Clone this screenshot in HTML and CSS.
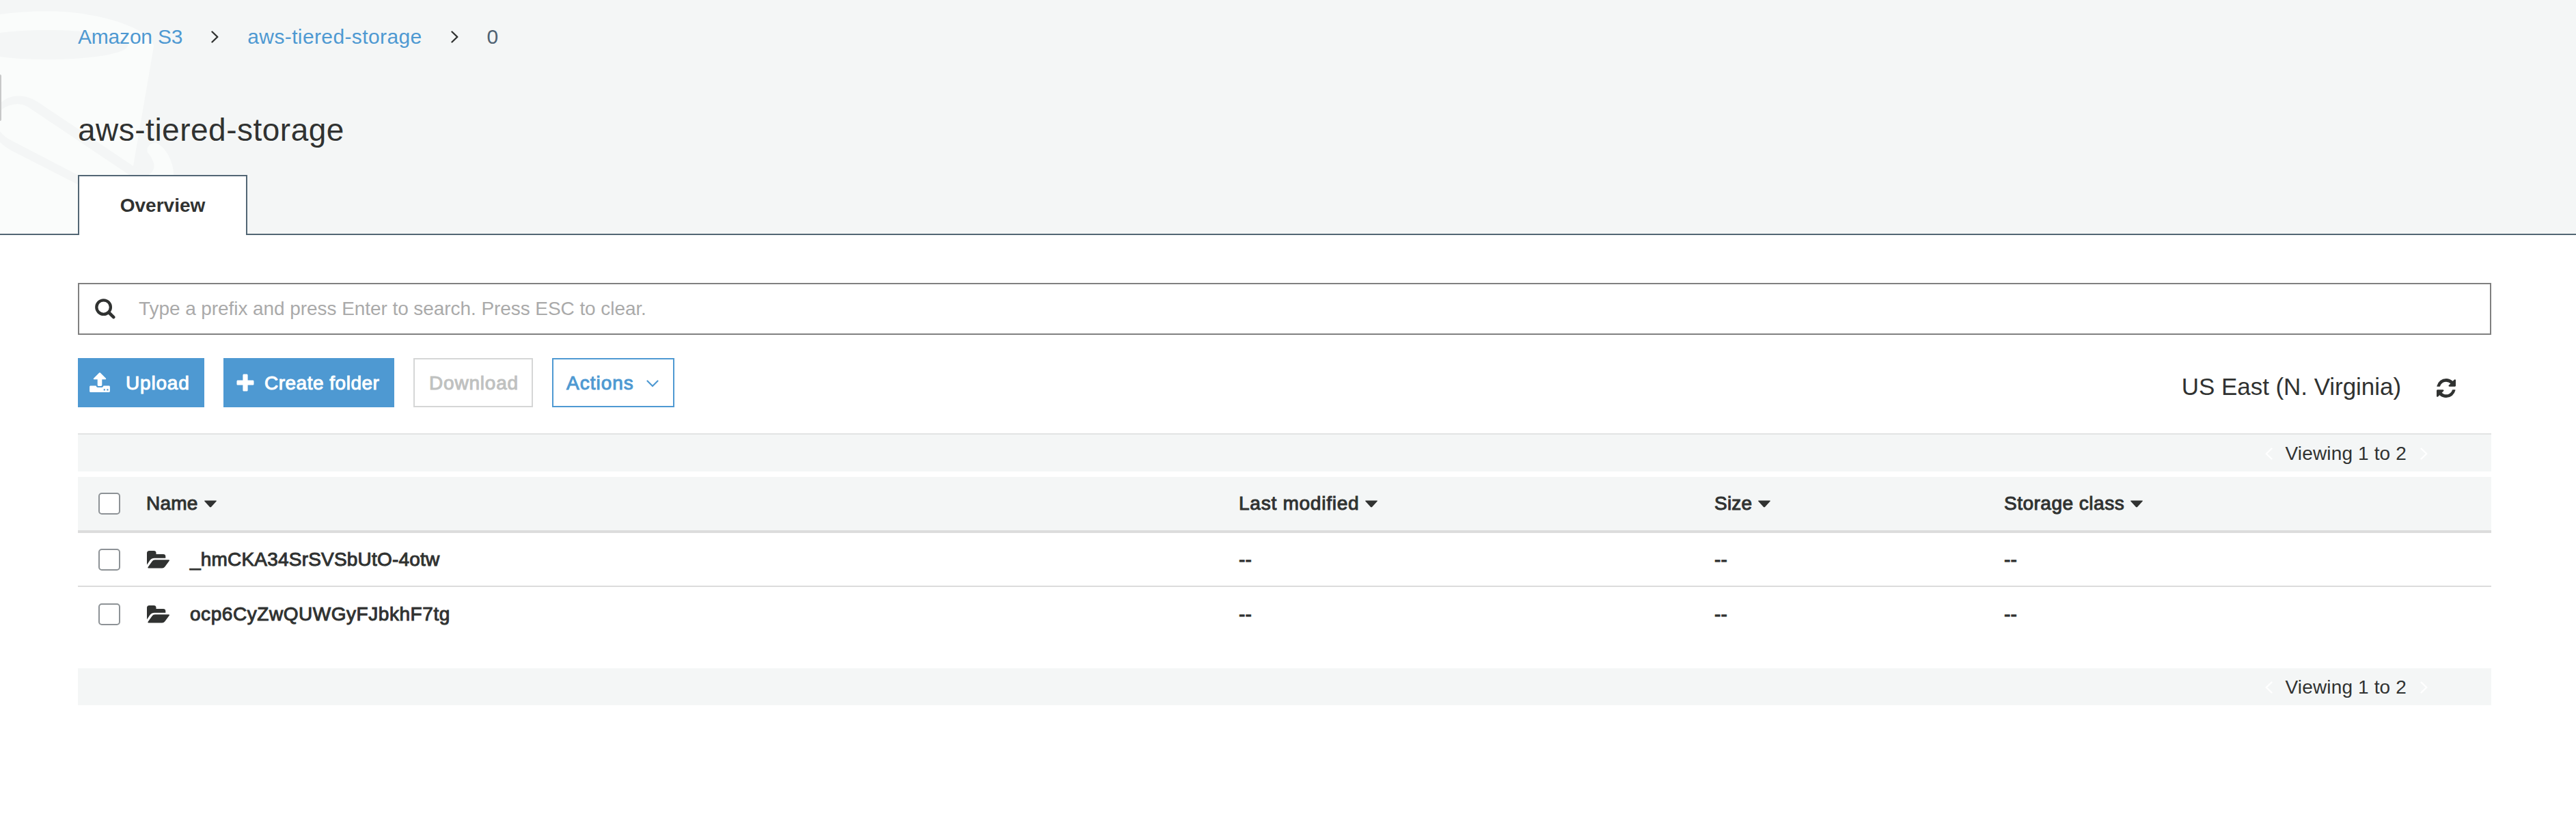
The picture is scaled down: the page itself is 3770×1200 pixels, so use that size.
FILE: index.html
```html
<!DOCTYPE html>
<html lang="en">
<head>
<meta charset="utf-8">
<title>Amazon S3</title>
<link rel="stylesheet" href="styles.css">
</head>
<body>
<svg class="defs" width="0" height="0" aria-hidden="true">
  <symbol id="chevron" viewBox="0 0 11 18"><path d="M1.5 1.5 9.3 9 1.5 16.5" fill="none" stroke="currentColor" stroke-width="2.4" stroke-linecap="round" stroke-linejoin="round"/></symbol>
  <symbol id="caret" viewBox="0 0 18 11"><path d="M.8.4h16.4c.7 0 1 .6.5 1.1L10 9.9c-.6.6-1.4.6-2 0L.3 1.5C-.2 1 .1.4.8.4z" fill="currentColor"/></symbol>
  <symbol id="folder" viewBox="0 0 33 26"><path d="M0 20.5V3.5C0 1.2 1.2 0 3.5 0h6.7c2 0 3.3 1.3 3.3 3v2h10.500c2 0 3.300 1.200 3.300 3.200v2.500H11c-2.700 0-4.800.9-6.400 3z" fill="currentColor"/><path d="M12 13.300h20c1 0 1.300.7.7 1.500l-6.500 8.700c-1 1.300-2.300 2-4 2H2.500c-1.200 0-1.500-.8-.8-1.800l5.700-7.900c1.200-1.700 2.600-2.500 4.600-2.500z" fill="currentColor"/></symbol>
</svg>

<header class="header">
  <svg class="bucket" width="260" height="342" viewBox="0 0 260 342">
    <path class="bucket-light" d="M0 21Q35 16 75 16.500C125 17 180 30 207 47Q225 58 225 68L195 243V342H0z"/>
    <path class="bucket-dark" d="M0 48Q30 44 68 44C130 44 187 52 187 66C187 79 130 87 68 87Q28 87 0 83z"/>
    <path class="bucket-dark" fill-rule="evenodd" d="M0 151Q14 139 30 140.500Q43 141 55 149L195 243L210 251Q221 254 225 246L260 262V300H150L114 270L20 222Q8 216 0 208V192Q5 199 14 204L114 256L189 256L43 158Q32 151 20 153Q7 155 0 163z"/>
    <path class="bucket-light" d="M2 162Q8 155 20 153Q32 151 43 158L189 256H114L14 204Q5 199 0 192V165z"/>
    <path class="bucket-light" d="M216 223C213 215 222 207 230 210C243 216 255 238 254 258H214C224 253 227 246 225 239Q222 230 216 223z"/>
  </svg>
  <span class="drawer-handle"></span>
  <nav class="breadcrumb">
    <a class="crumb crumb-root">Amazon S3</a>
    <svg class="sep" width="11" height="18"><use href="#chevron"/></svg>
    <a class="crumb crumb-bucket">aws-tiered-storage</a>
    <svg class="sep" width="11" height="18"><use href="#chevron"/></svg>
    <span class="crumb-current">0</span>
  </nav>
  <h1 class="title">aws-tiered-storage</h1>
  <div class="tabs"><div class="tab">Overview</div></div>
</header>

<main class="content">
  <div class="search">
    <svg class="search-icon" width="30" height="30" viewBox="0 0 30 30"><circle cx="12.600" cy="12.600" r="10.300" fill="none" stroke="currentColor" stroke-width="4.300"/><path d="M20.500 20.500l6.700 6.700" stroke="currentColor" stroke-width="4.600" stroke-linecap="round"/></svg>
    <span class="placeholder">Type a prefix and press Enter to search. Press ESC to clear.</span>
  </div>

  <div class="toolbar">
    <button class="btn primary upload">
      <svg width="30" height="30" viewBox="0 0 30 30" fill="currentColor"><path d="M14.200.6a1.200 1.200 0 0 1 1.600 0l8 8c.8.8.4 1.700-.7 1.700h-4.800v8.200c0 .9-.6 1.400-1.400 1.400h-3.800c-.8 0-1.400-.5-1.400-1.400v-8.200H6.900c-1.100 0-1.500-.9-.7-1.700z"/><path fill-rule="evenodd" d="M1.600 19.500h7.900c.6 1.800 1.700 2.600 3.500 2.600h4c1.800 0 2.900-.8 3.500-2.600h7.900c.9 0 1.500.6 1.500 1.500v6.500c0 .9-.6 1.500-1.500 1.500H1.600C.7 29 .1 28.400.1 27.500V21c0-.9.6-1.500 1.500-1.500zM20.700 24.300v2.200h2.200v-2.200zM25.300 24.300v2.200h2.200v-2.200z"/></svg>
      <span>Upload</span>
    </button>
    <button class="btn primary create">
      <svg width="26" height="26" viewBox="0 0 26 26"><path d="M11 .5h4c1 0 1.600.6 1.600 1.600v7.300h7.300c1 0 1.600.6 1.600 1.600v4c0 1-.6 1.600-1.600 1.600h-7.300v7.300c0 1-.6 1.600-1.600 1.600h-4c-1 0-1.600-.6-1.600-1.600v-7.300H2.100C1.100 16.600.5 16 .5 15v-4c0-1 .6-1.600 1.600-1.600h7.300V2.100C9.400 1.100 10 .5 11 .5z" fill="currentColor"/></svg>
      <span>Create folder</span>
    </button>
    <button class="btn disabled"><span>Download</span></button>
    <button class="btn outline">
      <span>Actions</span>
      <svg width="18" height="11" viewBox="0 0 18 11"><path d="M1.500 1.500 9 9l7.500-7.500" fill="none" stroke="currentColor" stroke-width="2.200" stroke-linecap="round"/></svg>
    </button>
    <div class="region">
      <span>US East (N. Virginia)</span>
      <svg class="refresh" width="28" height="28" viewBox="0 0 1536 1536"><path fill="currentColor" d="M1511 928q0 5-1 7-64 268-268 434.500T764 1536q-146 0-282.500-55T238 1324l-129 129q-19 19-45 19t-45-19-19-45V960q0-26 19-45t45-19h448q26 0 45 19t19 45-19 45l-137 137q71 66 161 102t187 36q134 0 250-65t186-179q11-17 53-117 8-23 30-23h192q13 0 22.500 9.500t9.500 22.500zm25-800v448q0 26-19 45t-45 19h-448q-26 0-45-19t-19-45 19-45l138-138Q969 256 768 256q-134 0-250 65T332 500q-11 17-53 117-8 23-30 23H50q-13 0-22.500-9.500T18 608v-7q65-268 270-434.500T768 0q146 0 284 55.500T1297 212l130-129q19-19 45-19t45 19 19 45z"/></svg>
    </div>
  </div>

  <div class="pager pager-top">
    <svg class="prev" width="11" height="18"><use href="#chevron"/></svg>
    <span>Viewing 1 to 2</span>
    <svg class="next" width="11" height="18"><use href="#chevron"/></svg>
  </div>

  <div class="row head">
    <span class="check"></span>
    <span class="cell name-head">Name <svg width="18" height="11"><use href="#caret"/></svg></span>
    <span class="cell modified">Last modified <svg width="18" height="11"><use href="#caret"/></svg></span>
    <span class="cell">Size <svg width="18" height="11"><use href="#caret"/></svg></span>
    <span class="cell class-head">Storage class <svg width="18" height="11"><use href="#caret"/></svg></span>
  </div>
  <div class="row">
    <span class="check"></span>
    <span class="cell object"><svg width="33" height="26"><use href="#folder"/></svg><span>_hmCKA34SrSVSbUtO-4otw</span></span>
    <span class="cell">--</span>
    <span class="cell">--</span>
    <span class="cell">--</span>
  </div>
  <div class="row last">
    <span class="check"></span>
    <span class="cell object second"><svg width="33" height="26"><use href="#folder"/></svg><span>ocp6CyZwQUWGyFJbkhF7tg</span></span>
    <span class="cell">--</span>
    <span class="cell">--</span>
    <span class="cell">--</span>
  </div>

  <div class="pager pager-bottom">
    <svg class="prev" width="11" height="18"><use href="#chevron"/></svg>
    <span>Viewing 1 to 2</span>
    <svg class="next" width="11" height="18"><use href="#chevron"/></svg>
  </div>
</main>
</body>
</html>
```
FILE: styles.css
```css
* {
  box-sizing: border-box;
}

body {
  margin: 0;
  background: #fff;
  color: #303231;
  font-family: "Liberation Sans", Arial, sans-serif;
  font-size: 28px;
}

svg {
  display: block;
  flex: none;
}

.defs {
  position: absolute;
}

/* Header */
.header {
  position: relative;
  height: 344px;
  padding: 32px 114px 0;
  background: #f4f6f6;
  border-bottom: 2px solid #526674;
}

.bucket {
  position: absolute;
  top: 0;
  left: 0;
}

.bucket-light {
  fill: #fafcfb;
}

.bucket-dark {
  fill: #f4f6f6;
}

.drawer-handle {
  position: absolute;
  left: 0;
  top: 109px;
  width: 2px;
  height: 68px;
  background: #c8c9c9;
  border-radius: 0 2px 2px 0;
}

.breadcrumb {
  position: relative;
  display: flex;
  align-items: center;
  height: 44px;
  font-size: 30px;
  line-height: 44px;
}

.crumb {
  color: #4e99d2;
}

.crumb-root {
  letter-spacing: -0.2px;
}

.crumb-bucket {
  letter-spacing: 0.38px;
}

.sep {
  margin: 0 42px;
  color: #303231;
}

.crumb-current {
  color: #4f6272;
}

.title {
  position: relative;
  margin: 84px 0 0;
  height: 60px;
  line-height: 60px;
  font-size: 46px;
  font-weight: 400;
  letter-spacing: 0.5px;
}

.tabs {
  position: relative;
  display: flex;
  margin-top: 36px;
}

.tab {
  width: 248px;
  height: 88px;
  background: #fff;
  border: 2px solid #526674;
  border-bottom: 0;
  font-weight: 700;
  line-height: 85px;
  text-align: center;
}

/* Content */
.content {
  padding: 70px 124px 0 114px;
}

.search {
  display: flex;
  align-items: center;
  height: 76px;
  padding-left: 23px;
  border: 2px solid #808080;
}

.placeholder {
  margin-left: 34px;
  color: #aaa;
  letter-spacing: -0.07px;
}

.toolbar {
  display: flex;
  align-items: flex-start;
  gap: 28px;
  height: 144px;
  padding-top: 34px;
}

.btn {
  display: flex;
  align-items: center;
  height: 72px;
  padding: 0;
  border: 0;
  background: #fff;
  font: inherit;
  letter-spacing: 0.8px;
  -webkit-text-stroke: 1px currentColor;
}

.btn span {
  padding-top: 2px;
}

.primary {
  color: #fff;
  background: #4e99d2;
}

.upload {
  width: 185px;
  padding-left: 17px;
}

.upload span {
  margin-left: 23px;
}

.create {
  width: 250px;
  padding-left: 19px;
  letter-spacing: 0.5px;
}

.create span {
  margin-left: 15px;
}

.disabled {
  width: 175px;
  padding-left: 21px;
  border: 2px solid #d5d6d6;
  color: #bfc1c0;
}

.outline {
  width: 179px;
  padding-left: 19px;
  border: 2px solid #4e99d2;
  color: #4e99d2;
  letter-spacing: 1px;
}

.outline svg {
  margin-left: 18px;
  margin-top: 3px;
}

.region {
  display: flex;
  align-items: center;
  height: 84px;
  margin-left: auto;
  padding-right: 52px;
  font-size: 35px;
  letter-spacing: -0.05px;
}

.refresh {
  margin-left: 52px;
  margin-top: 4px;
}

/* Pager bars */
.pager {
  display: flex;
  justify-content: flex-end;
  align-items: center;
  padding: 2px 93px 0 0;
  background: #f4f6f6;
  letter-spacing: 0.15px;
}

.pager svg {
  color: #fff;
}

.pager-top {
  height: 56px;
  border-top: 2px solid #e2e4e3;
}

.pager-bottom {
  height: 54px;
  margin-top: 40px;
}

.prev {
  margin-right: 19px;
  transform: scaleX(-1);
}

.next {
  margin-left: 20px;
}

/* Object table */
.row {
  display: grid;
  grid-template-columns: 70px 1599px 696px 424px 1fr;
  align-items: center;
  height: 79px;
  padding-left: 30px;
  border-bottom: 2px solid #dcdcdc;
  -webkit-text-stroke: 1px currentColor;
}

.head {
  height: 82px;
  margin-top: 8px;
  background: #f4f6f6;
  border-bottom-width: 4px;
}

.last {
  border-bottom: 0;
}

.check {
  width: 32px;
  height: 32px;
  background: #fff;
  border: 2px solid #8d9296;
  border-radius: 5px;
}

.cell {
  display: flex;
  align-items: center;
  letter-spacing: 0.2px;
}

.head .cell svg {
  margin-left: 9px;
}

.head .modified {
  letter-spacing: 0.75px;
}

.head .class-head {
  letter-spacing: 0.5px;
}

.object svg {
  margin: 0 30px 0 1px;
}

.object.second {
  letter-spacing: 0.55px;
}
```
